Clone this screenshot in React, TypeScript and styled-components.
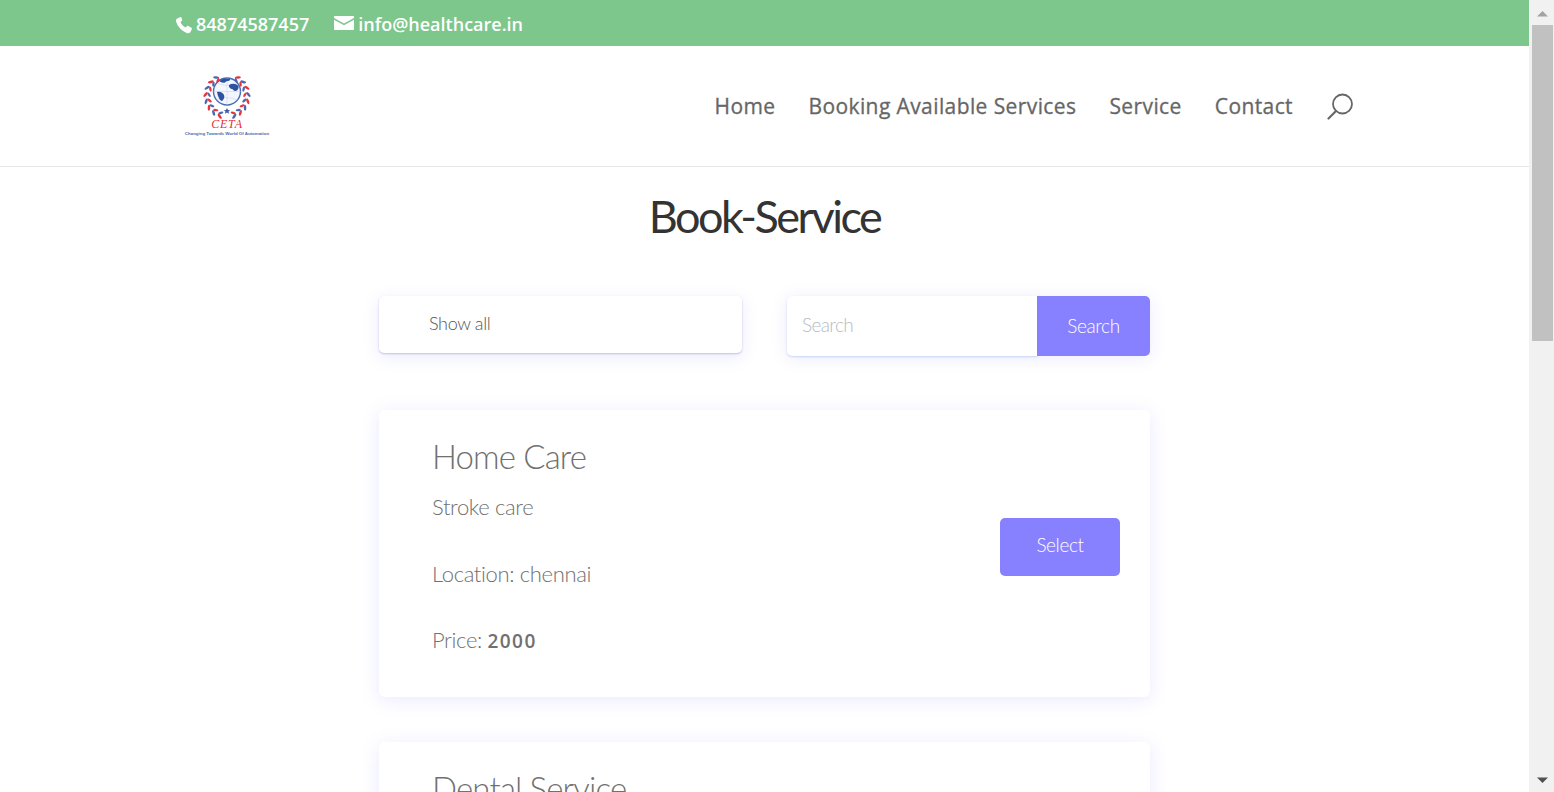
import React from 'react';
import styled, { createGlobalStyle } from 'styled-components';

const GlobalStyle = createGlobalStyle`
	html, body {
		margin: 0;
		padding: 0;
		height: 100%;
		overflow: hidden;
		background: #fff;
	}
	* {
		box-sizing: border-box;
	}
`;

const Shell = styled.div`
	display: flex;
	width: 1554px;
	height: 792px;
	overflow: hidden;
`;

const Page = styled.div`
	width: 1529px;
	height: 792px;
	overflow: hidden;
	font-family: 'Lato', sans-serif;
`;

const TopBar = styled.div`
	display: flex;
	align-items: center;
	gap: 25px;
	height: 46px;
	padding: 2px 0 0 175px;
	background: #7dc68c;
	color: #fff;
	font-family: 'Open Sans', sans-serif;
	font-size: 18px;
	font-weight: 600;
`;

const TopItem = styled.span`
	display: flex;
	align-items: center;
	gap: 3px;
`;

const Header = styled.header`
	display: flex;
	align-items: center;
	justify-content: space-between;
	height: 121px;
	padding: 0 175px 0 182px;
	border-bottom: 1px solid #e6e6e6;
`;

const Nav = styled.nav`
	display: flex;
	align-items: center;
	gap: 33px;
	font-family: 'Open Sans', sans-serif;
	font-size: 21px;
	font-weight: 400;
	letter-spacing: 0.4px;
	color: #666;
	-webkit-text-stroke: 0.3px #666;
`;

const SearchIcon = styled.svg`
	width: 28px;
	height: 28px;
	margin-top: 2px;
`;

const Title = styled.h1`
	margin: 21px 0 0;
	text-align: center;
	font-size: 45px;
	line-height: 56px;
	font-weight: 400;
	letter-spacing: -2.500px;
	color: #333;
`;

const Content = styled.main`
	display: flex;
	flex-direction: column;
	width: 771px;
	margin: 0 auto;
`;

const Filters = styled.div`
	display: flex;
	justify-content: space-between;
	align-items: flex-start;
	margin: 52px 0 54px;
`;

const FilterSelect = styled.div`
	display: flex;
	align-items: center;
	width: 363px;
	height: 57px;
	padding: 0 0 4px 50px;
	background: #fff;
	border-radius: 5px;
	box-shadow: 0 1px 2px rgba(100, 100, 180, 0.35), 0 4px 16px rgba(130, 125, 255, 0.16);
	font-size: 18px;
	font-weight: 300;
	letter-spacing: -0.35px;
	color: #555;
`;

const SearchGroup = styled.div`
	display: flex;
	width: 363px;
	height: 60px;
	border-radius: 5px;
	box-shadow: 0 2px 16px rgba(130, 125, 255, 0.16);
`;

const SearchInput = styled.div`
	display: flex;
	align-items: center;
	flex: 1;
	padding: 0 0 4px 15px;
	border-radius: 5px 0 0 5px;
	box-shadow: 0 1px 2px rgba(100, 140, 220, 0.3);
	font-size: 19px;
	font-weight: 300;
	letter-spacing: -0.6px;
	color: #b4bdc4;
`;

const PrimaryButton = styled.div<{ $width: number; $height: number }>`
	display: flex;
	align-items: center;
	justify-content: center;
	width: ${props => props.$width}px;
	height: ${props => props.$height}px;
	background: #8781ff;
	color: #fff;
	font-size: 19px;
	font-weight: 300;
	letter-spacing: -0.4px;
`;

const SearchButton = styled(PrimaryButton)`
	position: relative;
	padding-bottom: 2px;
	border-radius: 0 5px 5px 0;
`;

const SelectButton = styled(PrimaryButton)`
	flex-shrink: 0;
	padding-bottom: 4px;
	border-radius: 5px;
`;

const Card = styled.section`
	display: flex;
	align-items: center;
	justify-content: space-between;
	flex-shrink: 0;
	height: 287px;
	margin-bottom: 45px;
	padding: 0 30px 14px 53px;
	background: #fff;
	border-radius: 6px;
	box-shadow: 0 3px 18px rgba(130, 125, 255, 0.17);
`;

const CardBody = styled.div`
	display: flex;
	flex-direction: column;
	align-self: flex-start;
	padding-top: 25px;
`;

const CardTitle = styled.h2`
	margin: 0 0 15px;
	font-size: 33px;
	line-height: 42px;
	font-weight: 300;
	letter-spacing: -0.85px;
	color: #707070;
`;

const CardLine = styled.p`
	margin: 0;
	height: 66.5px;
	font-size: 22px;
	line-height: 30px;
	font-weight: 300;
	letter-spacing: -0.35px;
	color: #707070;
`;

const Price = styled.b`
	font-family: 'Open Sans', sans-serif;
	font-size: 19px;
	font-weight: 600;
	letter-spacing: 1.400px;
`;

const Scrollbar = styled.div`
	display: flex;
	flex-direction: column;
	align-items: center;
	width: 25px;
	height: 792px;
	padding-left: 2px;
	background: #f1f1f1;
`;

const ScrollArrow = styled.svg`
	flex-shrink: 0;
	width: 23px;
	height: 25px;
`;

const ScrollThumb = styled.div`
	flex-shrink: 0;
	width: 21px;
	height: 316px;
	background: #c1c1c1;
`;

const ScrollRest = styled.div`
	flex: 1;
`;

const PhoneIcon = () => (
	<svg width="18" height="18" viewBox="0 0 24 24" style={{ marginTop: 1 }}>
		<path
			fill="#fff"
			d="M6.600 1.500 2.400 3.600C1 4.500 1 6.500 1.800 8.600c2.600 6.500 7 11 13.600 13.900 2 .8 4 .6 5-1l2-3.700c.4-.8.1-1.500-.6-2l-4-2.600c-.7-.4-1.500-.3-2 .3l-1.500 1.800c-3.300-1.500-5.700-4-7-7.200l1.800-1.400c.6-.5.7-1.300.4-2L8.700 2c-.4-.7-1.300-1-2.100-.5Z"
		/>
	</svg>
);

const MailIcon = () => (
	<svg width="20" height="14" viewBox="0 0 20 14" style={{ marginRight: 1, marginTop: -3 }}>
		<path fill="#fff" d="M1 0h18c.6 0 1 .4 1 1v1l-10 5.500L0 2V1c0-.6.4-1 1-1Z" />
		<path fill="#fff" d="M0 3.800l10 5.400 10-5.400V13c0 .6-.4 1-1 1H1c-.6 0-1-.4-1-1V3.800Z" />
	</svg>
);

const laurelSteps = [0, 1, 2, 3, 4, 5, 6, 7];
const RED = '#e8343f';
const BLUE = '#4a68b0';

// one side of the wreath, the other is the same leaves mirrored round x = 45
const laurelLeaf = (step: number, radius: number, tilt: number) => {
	const degrees = 20 + step * 18.5;
	const theta = (degrees * Math.PI) / 180;
	return {
		x: radius * Math.sin(theta),
		y: 20 + radius * Math.cos(theta),
		angle: degrees + tilt,
	};
};

const Logo = () => (
	<svg width="90" height="64" viewBox="0 0 90 64">
		<g transform="translate(0 2)">
			<circle cx="45" cy="15.500" r="13.500" fill="#f3f6fc" stroke="#4a6cb5" strokeWidth="1.400" />
			<path stroke="#c4d0e8" strokeWidth="0.500" fill="none" d="M31.500 15.500h27M45 2v27M35 7c6 3 14 3 20 0M35 24c6-3 14-3 20 0" />
			<path fill="#2f52a0" d="M37 5c4-3 8-3 11-2 1 1.500-2 2-4 2.500-1 2-4 1.500-7-.5ZM47 9c3-2 7-1.500 9.500 1 .6 2-1 5-3 5-2 .4-2-2-4-2-2-.6-3-2.500-2.500-4ZM35 16c3-1 6 .5 7 3s-.6 5-2 6c-2 0-4-4-5-9Z" />
			{laurelSteps.map(step => {
				const outer = laurelLeaf(step, 21.500, 35);
				const inner = laurelLeaf(step, 18, -35);
				const outerTone = step % 2 === 0 ? RED : BLUE;
				const innerTone = step % 2 === 0 ? BLUE : RED;
				return (
					<g key={step}>
						<ellipse cx={45 - outer.x} cy={outer.y} rx="3" ry="1.300" fill={outerTone} transform={`rotate(${outer.angle} ${45 - outer.x} ${outer.y})`} />
						<ellipse cx={45 + outer.x} cy={outer.y} rx="3" ry="1.300" fill={innerTone} transform={`rotate(${-outer.angle} ${45 + outer.x} ${outer.y})`} />
						<ellipse cx={45 - inner.x} cy={inner.y} rx="2.600" ry="1.200" fill={innerTone} transform={`rotate(${inner.angle} ${45 - inner.x} ${inner.y})`} />
						<ellipse cx={45 + inner.x} cy={inner.y} rx="2.600" ry="1.200" fill={outerTone} transform={`rotate(${-inner.angle} ${45 + inner.x} ${inner.y})`} />
					</g>
				);
			})}
			<path fill="#3a5ca8" d="m45 32 1 2 2.200.2-1.700 1.400.6 2.200-2.100-1.200-2.100 1.200.6-2.200-1.700-1.400 2.200-.2Z" />
		</g>
		<text x="45" y="54" textAnchor="middle" fontFamily="'Liberation Serif', serif" fontStyle="italic" fontSize="12" fill="#e62e38" letterSpacing="0.800">CETA</text>
		<text x="45" y="61" textAnchor="middle" fontFamily="'Liberation Sans', sans-serif" fontWeight="700" fontSize="4.400" fill="#4a68b0">Changing Towards World Of Automation</text>
	</svg>
);

const App = () => {
	return (
		<Shell>
			<GlobalStyle />
			<Page>
				<TopBar>
					<TopItem>
						<PhoneIcon />
						84874587457
					</TopItem>
					<TopItem>
						<MailIcon />
						info@healthcare.in
					</TopItem>
				</TopBar>
				<Header>
					<Logo />
					<Nav>
						<span>Home</span>
						<span>Booking Available Services</span>
						<span>Service</span>
						<span>Contact</span>
						<SearchIcon viewBox="0 0 28 28" fill="none" stroke="#666" strokeWidth="1.800">
							<circle cx="16.500" cy="11" r="9.500" />
							<path d="M10 18 2.500 25.500" strokeWidth="2.200" strokeLinecap="round" />
						</SearchIcon>
					</Nav>
				</Header>
				<Title>Book-Service</Title>
				<Content>
					<Filters>
						<FilterSelect>Show all</FilterSelect>
						<SearchGroup>
							<SearchInput>Search</SearchInput>
							<SearchButton $width={113} $height={60}>Search</SearchButton>
						</SearchGroup>
					</Filters>
					<Card>
						<CardBody>
							<CardTitle>Home Care</CardTitle>
							<CardLine>Stroke care</CardLine>
							<CardLine>Location: chennai</CardLine>
							<CardLine>
								Price: <Price>2000</Price>
							</CardLine>
						</CardBody>
						<SelectButton $width={120} $height={58}>Select</SelectButton>
					</Card>
					<Card>
						<CardBody>
							<CardTitle>Dental Service</CardTitle>
						</CardBody>
					</Card>
				</Content>
			</Page>
			<Scrollbar>
				<ScrollArrow viewBox="0 0 23 25">
					<path d="M6 16.500 11.500 11l5.500 5.500Z" fill="#a3a3a3" />
				</ScrollArrow>
				<ScrollThumb />
				<ScrollRest />
				<ScrollArrow viewBox="0 0 23 25">
					<path d="M6 10.500h11L11.500 16Z" fill="#505050" />
				</ScrollArrow>
			</Scrollbar>
		</Shell>
	);
};

export default App;
